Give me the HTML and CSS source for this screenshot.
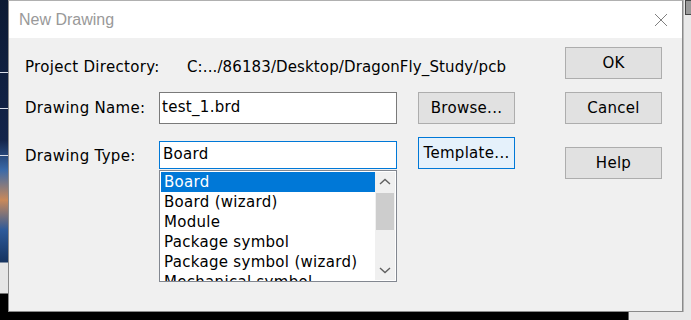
FILE: index.html
```html
<!DOCTYPE html>
<html lang="en">
<head>
  <meta charset="UTF-8">
  <title>New Drawing</title>
  <link rel="stylesheet" href="styles.css">
</head>
<body>
  <div class="desk">
    <div class="wall wall-left">
      <span class="wall-line l1"></span>
      <span class="wall-line l2"></span>
      <span class="wall-line l3"></span>
    </div>

    <div class="dialog">
      <div class="titlebar">
        <span class="title">New Drawing</span>
        <svg class="close" width="14" height="14" viewBox="0 0 14 14">
          <path d="M1 1 L13 13 M13 1 L1 13" stroke="#808080" stroke-width="1" fill="none"/>
        </svg>
      </div>

      <div class="content">
        <div class="form">
          <div class="row row-dir">
            <span class="label">Project Directory:</span>
            <span class="path">C:.../86183/Desktop/DragonFly_Study/pcb</span>
          </div>

          <div class="row row-name">
            <span class="label">Drawing Name:</span>
            <div class="field">test_1.brd</div>
            <button class="btn">Browse...</button>
          </div>

          <div class="row row-type">
            <span class="label">Drawing Type:</span>
            <div class="picker">
              <div class="combo">Board</div>
              <div class="list">
                <ul class="items">
                  <li class="selected">Board</li>
                  <li>Board (wizard)</li>
                  <li>Module</li>
                  <li>Package symbol</li>
                  <li>Package symbol (wizard)</li>
                  <li>Mechanical symbol</li>
                </ul>
                <div class="scrollbar">
                  <svg class="arrow" width="20" height="20" viewBox="0 0 20 20">
                    <path d="M5 12 L10 7.5 L15 12" stroke="#606060" stroke-width="1.4" fill="none"/>
                  </svg>
                  <div class="thumb"></div>
                  <div class="track"></div>
                  <svg class="arrow" width="20" height="20" viewBox="0 0 20 20">
                    <path d="M5 8 L10 12.5 L15 8" stroke="#606060" stroke-width="1.4" fill="none"/>
                  </svg>
                </div>
              </div>
            </div>
            <button class="btn btn-focus">Template...</button>
          </div>
        </div>

        <div class="actions">
          <button class="btn">OK</button>
          <button class="btn">Cancel</button>
          <button class="btn btn-help">Help</button>
        </div>
      </div>
    </div>

    <div class="wall wall-right">
      <span class="wall-box"></span>
    </div>
  </div>
  <div class="taskbar">
    <span class="taskbar-edge"></span>
  </div>
</body>
</html>
```

FILE: styles.css
```css
body {
  margin: 0;
  width: 691px;
  height: 320px;
  overflow: hidden;
  background: #000;
  font-family: "DejaVu Sans", sans-serif;
  font-size: 15px;
  letter-spacing: 0.3px;
  color: #000;
}
.desk {
  display: flex;
  height: 312px;
}
.wall {
  width: 8px;
  flex: none;
  position: relative;
}
.wall-left {
  background: linear-gradient(to bottom, #0c1a33 0, #13244a 140px, #3a6aa8 170px, #c9895a 200px, #2d5a9a 230px, #16335f 262px, #e6e6e6 263px, #e6e6e6 293px, #000 294px);
}
.wall-line {
  position: absolute;
  left: 0;
  width: 8px;
  height: 1px;
  background: #d8dde8;
}
.l1 { top: 72px; }
.l2 { top: 108px; }
.l3 { top: 155px; }
.wall-right {
  background: #e9e9e9;
  border-left: 1px solid #b8b8b8;
  width: 7px;
}
.wall-box {
  position: absolute;
  top: 0;
  left: 1px;
  width: 6px;
  height: 13px;
  border: 1px solid #444;
  border-right: none;
  background: #9a9a9a;
}
.dialog {
  width: 673px;
  flex: none;
  border: 1px solid #8a8a8a;
  border-top-color: #b0b0b0;
  background: #f0f0f0;
  box-shadow: 1px 1px 1px rgba(0,0,0,0.25);
  display: flex;
  flex-direction: column;
}
.titlebar {
  height: 37px;
  background: #fff;
  display: flex;
  align-items: center;
  justify-content: space-between;
  padding: 0 14px 0 10px;
}
.title {
  font-family: "Liberation Sans", sans-serif;
  font-size: 16px;
  letter-spacing: 0;
  color: #999;
}
.close {
  display: block;
}
.content {
  flex: 1;
  display: flex;
  justify-content: space-between;
  padding: 0 20px 0 16px;
}
.row {
  display: grid;
  grid-template-columns: 113px 238px 97px;
  column-gap: 21px;
  align-items: center;
}
.label {
  line-height: 18px;
  white-space: nowrap;
}
.row-dir {
  margin-top: 20px;
}
.path {
  grid-column: 2 / 4;
  margin-left: 28px;
  line-height: 18px;
  letter-spacing: 0.12px;
  white-space: nowrap;
}
.row-name {
  margin-top: 16px;
}
.field {
  box-sizing: border-box;
  height: 32px;
  border: 1px solid #7a7a7a;
  background: #fff;
  padding: 0 2px;
  line-height: 29px;
}
.row-type {
  margin-top: 13px;
  align-items: start;
}
.row-type .label {
  margin-top: 10px;
}
.picker {
  margin-top: 4px;
}
.combo {
  box-sizing: border-box;
  height: 28px;
  border: 1px solid #0078d7;
  background: #fff;
  padding: 0 3px;
  line-height: 25px;
}
.list {
  box-sizing: border-box;
  height: 112px;
  margin-top: 1px;
  border: 1px solid #828790;
  background: #fff;
  padding: 1px;
  display: flex;
  overflow: hidden;
}
.items {
  list-style: none;
  margin: 0;
  padding: 0;
  flex: 1;
}
.items li {
  height: 20px;
  line-height: 20px;
  padding-left: 3px;
  white-space: nowrap;
}
.items li.selected {
  background: #0078d7;
  color: #fff;
}
.scrollbar {
  width: 20px;
  background: #f0f0f0;
  display: flex;
  flex-direction: column;
}
.arrow {
  display: block;
  flex: none;
}
.thumb {
  height: 37px;
  margin: 1px 1px 0;
  background: #cdcdcd;
  flex: none;
}
.track {
  flex: 1;
}
.btn {
  box-sizing: border-box;
  width: 97px;
  height: 32px;
  border: 1px solid #adadad;
  background: #e1e1e1;
  font-family: "DejaVu Sans", sans-serif;
  font-size: 15px;
  letter-spacing: 0.3px;
  color: #000;
  padding: 0;
}
.btn-focus {
  border-color: #0078d7;
  background: #e5f1fb;
}
.actions {
  display: flex;
  flex-direction: column;
  gap: 13px;
  padding-top: 9px;
}
.btn-help {
  margin-top: 10px;
}
.taskbar {
  height: 8px;
  position: relative;
}
.taskbar-edge {
  position: absolute;
  left: 628px;
  top: 0;
  width: 63px;
  height: 8px;
  background: #e9e9e9;
  border-left: 1px solid #666;
}
```
